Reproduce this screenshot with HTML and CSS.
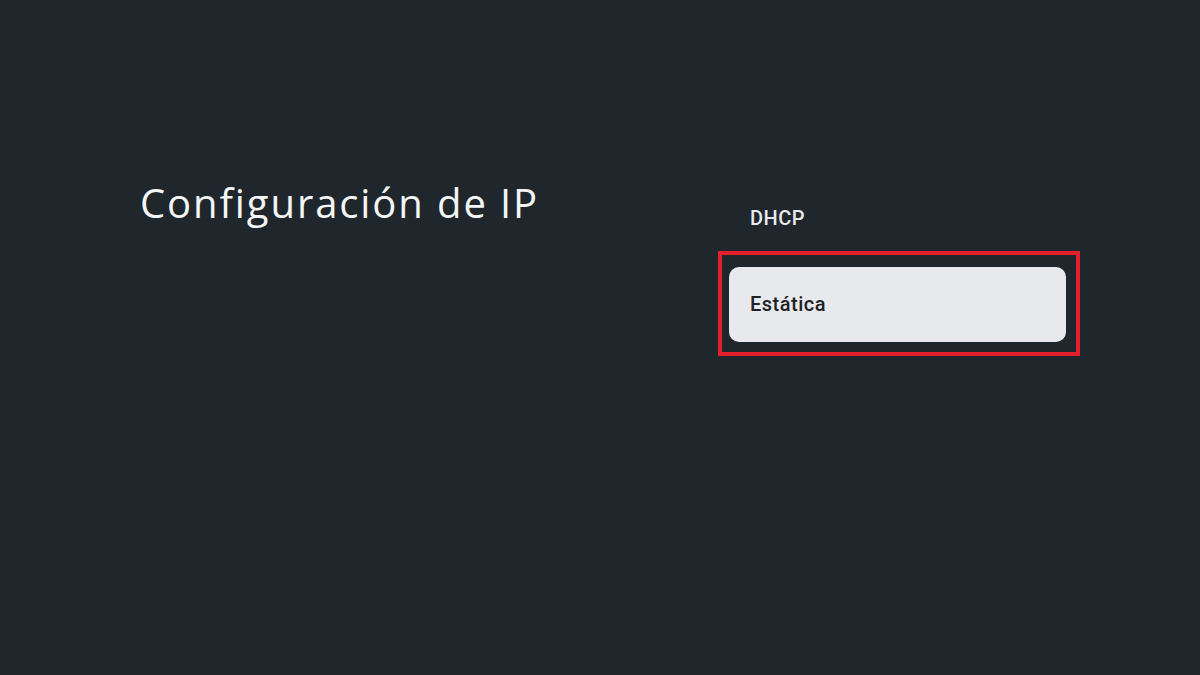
FILE: index.html
```html
<!DOCTYPE html>
<html lang="es">
<head>
<meta charset="utf-8">
<title>Configuración de IP</title>
<link rel="stylesheet" href="styles.css">
</head>
<body>
<main class="screen">
  <section class="left">
    <h1 class="title">Configuración de IP</h1>
  </section>
  <section class="right">
    <div class="option plain">DHCP</div>
    <div class="highlight">
      <div class="option card">Estática</div>
    </div>
  </section>
</main>
</body>
</html>
```
FILE: styles.css
```css
html, body {
  margin: 0;
  padding: 0;
  background: #20272c;
}
.screen {
  display: flex;
  width: 1200px;
  height: 675px;
  font-family: "Open Sans", "Liberation Sans", sans-serif;
}
.left {
  width: 718px;
  box-sizing: border-box;
  padding: 176px 0 0 140px;
}
.title {
  margin: 0;
  font-size: 40px;
  line-height: 54px;
  font-weight: 400;
  color: #f4f5f6;
  letter-spacing: 1.9px;
}
.right {
  width: 362px;
  padding-top: 200px;
}
.option {
  font-family: Roboto, "Open Sans", sans-serif;
  font-size: 20px;
  font-weight: 500;
  letter-spacing: 0.5px;
  box-sizing: border-box;
}
.plain {
  color: #e8eaed;
  padding-left: 32px;
  height: 37px;
  line-height: 37px;
  margin-bottom: 14px;
}
.highlight {
  border: 4px solid #e21f2b;
  padding: 12px 10px 10px 7px;
}
.card {
  background: #e8e9ed;
  color: #202124;
  border-radius: 10px;
  height: 75px;
  line-height: 75px;
  padding-left: 21px;
}
```
